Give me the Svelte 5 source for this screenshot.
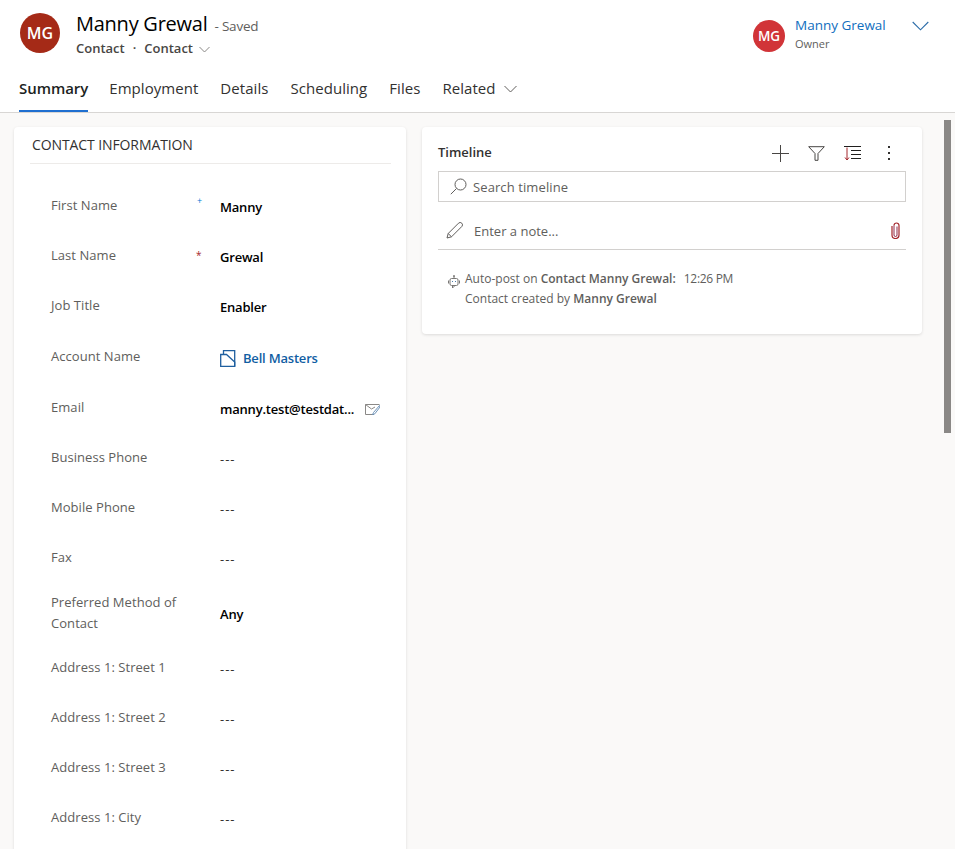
<script>
  const fields = [
    { label: 'First Name', value: 'Manny', req: 'rec' },
    { label: 'Last Name', value: 'Grewal', req: 'req' },
    { label: 'Job Title', value: 'Enabler' },
    { label: 'Account Name', value: 'Bell Masters', kind: 'link' },
    { label: 'Email', value: 'manny.test@testdat...', kind: 'mail' },
    { label: 'Business Phone', value: '---' },
    { label: 'Mobile Phone', value: '---' },
    { label: 'Fax', value: '---' },
    { label: 'Preferred Method of Contact', value: 'Any', tall: true },
    { label: 'Address 1: Street 1', value: '---' },
    { label: 'Address 1: Street 2', value: '---' },
    { label: 'Address 1: Street 3', value: '---' },
    { label: 'Address 1: City', value: '---' }
  ];
  const tabs = ['Summary', 'Employment', 'Details', 'Scheduling', 'Files'];
</script>

<div class="page">
  <header>
    <div class="top">
      <div class="avatar big">MG</div>
      <div class="title">
        <div class="name-row"><h1>Manny Grewal</h1><span class="saved">- Saved</span></div>
        <div class="crumbs">
          <span>Contact</span><span class="dot">·</span><span>Contact</span>
          <svg width="11" height="7" viewBox="0 0 11 7"><path d="M.5 1 5.500 6l5-5" fill="none" stroke="#8a8886"/></svg>
        </div>
      </div>
      <div class="owner">
        <div class="avatar small">MG</div>
        <div class="owner-text">
          <div class="owner-name">Manny Grewal</div>
          <div class="owner-role">Owner</div>
        </div>
        <svg class="owner-chev" width="17" height="10" viewBox="0 0 17 10"><path d="M.7 1 8.500 8.800 16.300 1" fill="none" stroke="#2b6ca8" stroke-width="1.100"/></svg>
      </div>
    </div>
    <nav>
      {#each tabs as t, i}
        <span class="tab" class:active={i === 0}>{t}</span>
      {/each}
      <span class="tab">Related
        <svg width="13" height="8" viewBox="0 0 13 8"><path d="M.5 1 6.500 7l6-6" fill="none" stroke="#605e5c"/></svg>
      </span>
    </nav>
  </header>

  <main>
    <section class="card info">
      <h2>CONTACT INFORMATION</h2>
      <div class="fields">
        {#each fields as f}
          <div class="field" class:tall={f.tall} class:wide={f.kind}>
            <div class="label">{f.label}</div>
            <div class="mark {f.req || ''}">{f.req === 'rec' ? '+' : f.req === 'req' ? '*' : ''}</div>
            <div class="value" class:link={f.kind === 'link'} class:empty={f.value === '---'}>
              {#if f.kind === 'link'}
                <svg width="16" height="17" viewBox="0 0 16 17" fill="none" stroke="#1f5f9f" stroke-width="1.300">
                  <path d="M3.500 4.500V.7h11.200v15.700"/>
                  <path d="M.7 4.500h5.800l8.200 7.500v4.300H.7z"/>
                </svg>
              {/if}
              <span>{f.value}</span>
              {#if f.kind === 'mail'}
                <svg class="mail" width="15" height="11" viewBox="0 0 15 11" fill="none">
                  <path d="M9 10.500H.5V.5h14" stroke="#8a8886"/>
                  <path d="M.5.500 6.500 5l3.500-2" stroke="#8a8886"/>
                  <path d="M14.500 1.500 8.500 8.500l-1 2.300 2.300-1L15 3z" stroke="#6f93b8"/>
                </svg>
              {/if}
            </div>
          </div>
        {/each}
      </div>
    </section>

    <section class="card timeline">
      <div class="tl-head">
        <span class="tl-title">Timeline</span>
        <div class="tl-tools">
          <svg width="17" height="17" viewBox="0 0 17 17"><path d="M8.500 0v17M0 8.500h17" stroke="#484644"/></svg>
          <svg width="17" height="15" viewBox="0 0 17 15" fill="none" stroke="#484644"><path d="M.7.700h15.600L10 7.500v6.800H7V7.500z"/></svg>
          <svg width="17" height="15" viewBox="0 0 17 15" fill="none"><path d="M0 .5h17M7 4.500h10M7 8.500h10M7 12.500h10" stroke="#201f1e"/><path d="M3 1.500v12.500M1 11.500 3 14l2-2.500" stroke="#a4262c"/></svg>
          <svg class="dots" width="4" height="14" viewBox="0 0 4 14"><path d="M1 0h2v2H1zM1 6h2v2H1zM1 12h2v2H1z" fill="#323130"/></svg>
        </div>
      </div>
      <div class="search">
        <svg width="17" height="17" viewBox="0 0 17 17" fill="none" stroke="#605e5c"><circle cx="10.500" cy="6.500" r="5.500"/><path d="M6.500 10.500.8 16.200"/></svg>
        <span>Search timeline</span>
      </div>
      <div class="note">
        <svg width="17" height="17" viewBox="0 0 17 17" fill="none" stroke="#605e5c"><path d="M1 16l1.200-4.500L12.500 1.200a1.800 1.800 0 0 1 3.300 3.300L5.500 14.800zM2.200 11.500l3.300 3.300"/></svg>
        <span>Enter a note...</span>
        <svg class="clip" width="9" height="17" viewBox="0 0 9 17" fill="none"><path d="M1 4v9a3.500 3.500 0 0 0 7 0V3.500a2.500 2.500 0 0 0-5 0" stroke="#a4262c" stroke-width="1.200"/><path d="M3 3.500v9.500a1.500 1.500 0 0 0 3 0V4.500" stroke="#8f2a4a"/></svg>
      </div>
      <div class="post">
        <svg width="12" height="14" viewBox="0 0 12 14" fill="none" stroke="#797775"><path d="M6 3V1"/><circle cx="6" cy="1" r=".6"/><rect x="2" y="3.500" width="8" height="7" rx="1.500"/><path d="M.5 5.500v3M11.500 5.500v3M4.500 10.500V13l2.500-2.500"/><path d="M4 6.500h1M7 6.500h1" stroke="#4c7da8"/></svg>
        <div class="post-text">
          <div>Auto-post on <b>Contact Manny Grewal:</b><span class="time">12:26 PM</span></div>
          <div class="second">Contact created by <b>Manny Grewal</b></div>
        </div>
      </div>
    </section>
  </main>

  <div class="thumb"></div>
</div>

<style>
  :global(body) {
    margin: 0;
  }
  .page {
    position: relative;
    height: 849px;
    overflow: hidden;
    background: #faf9f8;
    color: #323130;
    font-family: 'Open Sans', 'Noto Sans', sans-serif;
    font-size: 13px;
  }
  header {
    height: 113px;
    box-sizing: border-box;
    background: #fff;
    border-bottom: 1px solid #d8d6d4;
    padding: 12px 26px 0 20px;
  }
  .top {
    display: flex;
    align-items: flex-start;
    height: 51px;
  }
  .avatar {
    border-radius: 50%;
    color: #fff;
    font-weight: 600;
    display: flex;
    align-items: center;
    justify-content: center;
    flex-shrink: 0;
  }
  .big {
    width: 40px;
    height: 40px;
    margin-top: 1px;
    background: #a52a17;
    font-size: 16px;
  }
  .small {
    width: 32px;
    height: 32px;
    background: #d13438;
    font-size: 13.500px;
  }
  .title {
    margin-left: 16px;
  }
  .name-row {
    display: flex;
    align-items: baseline;
    gap: 7px;
    height: 24px;
  }
  h1 {
    margin: 0;
    font-size: 20px;
    font-weight: 500;
    line-height: 24px;
    color: #000;
    letter-spacing: -0.25px;
  }
  .saved {
    font-size: 13.500px;
    color: #605e5c;
    letter-spacing: -0.2px;
  }
  .crumbs {
    margin-top: 3px;
    display: flex;
    align-items: center;
    font-weight: 600;
    font-size: 13px;
    color: #484644;
    line-height: 18px;
  }
  .dot {
    margin: 0 8px;
  }
  .crumbs svg {
    margin: 2px 0 0 6px;
  }
  .owner {
    margin-left: auto;
    display: flex;
    align-items: flex-start;
    padding-top: 8px;
  }
  .owner-text {
    margin-left: 10px;
    margin-top: -4px;
    width: 117px;
  }
  .owner-name {
    color: #106ebe;
    font-size: 13.500px;
    line-height: 18px;
  }
  .owner-role {
    color: #605e5c;
    font-size: 11px;
    line-height: 16px;
    margin-top: 2px;
  }
  .owner-chev {
    margin-top: 1px;
  }
  nav {
    display: flex;
    gap: 22px;
    height: 49px;
    margin-left: -1px;
  }
  .tab {
    font-size: 15px;
    line-height: 20px;
    padding-top: 15px;
    color: #323130;
    box-sizing: border-box;
    height: 49px;
    letter-spacing: 0.05px;
  }
  .tab svg {
    margin-left: 5px;
    vertical-align: 1px;
  }
  .active {
    font-weight: 600;
    color: #201f1e;
    border-bottom: 2px solid #1f6fd0;
    margin-right: -1px;
    letter-spacing: -0.05px;
  }
  main {
    display: flex;
    align-items: flex-start;
    gap: 16px;
    padding: 14px 0 0 14px;
  }
  .card {
    background: #fff;
    border-radius: 4px;
    box-shadow: 0 1px 3px rgba(0, 0, 0, 0.12);
  }
  .info {
    width: 392px;
    box-sizing: border-box;
    padding: 0 15px 0 16px;
    height: 800px;
  }
  h2 {
    margin: 0;
    height: 36px;
    padding-left: 2px;
    line-height: 36px;
    font-size: 14px;
    font-weight: 500;
    letter-spacing: -0.1px;
    border-bottom: 1px solid #edebe9;
  }
  .fields {
    padding-top: 16px;
  }
  .field {
    display: grid;
    grid-template-columns: 145px 24px 1fr;
    height: 50px;
    box-sizing: border-box;
    align-items: center;
    padding-left: 21px;
  }
  .wide {
    height: 51px;
    padding-top: 2px;
  }
  .tall {
    height: 60px;
  }
  .tall .label {
    padding-top: 2px;
  }
  .label {
    color: #605e5c;
    line-height: 21px;
    letter-spacing: 0.05px;
  }
  .mark {
    align-self: start;
    font-size: 9px;
    line-height: 12px;
    padding-left: 1px;
  }
  .rec {
    color: #0078d4;
    margin-top: 15px;
  }
  .req {
    color: #a4262c;
    margin-top: 19px;
    padding-left: 0;
    font-size: 10px;
  }
  .value {
    display: flex;
    align-items: center;
    color: #000;
    font-weight: 600;
    font-size: 13px;
    letter-spacing: -0.2px;
    padding-top: 3px;
  }
  .empty {
    font-weight: 400;
    color: #323130;
    letter-spacing: 1px;
  }
  .link {
    color: #115ea3;
    gap: 7px;
  }
  .mail {
    margin-left: 11px;
  }
  .timeline {
    width: 500px;
    height: 207px;
    box-sizing: border-box;
    padding: 0 16px;
  }
  .tl-head {
    display: flex;
    align-items: center;
    justify-content: space-between;
    height: 44px;
    padding: 6px 15px 0 0;
    box-sizing: border-box;
  }
  .tl-title {
    font-weight: 600;
    color: #323130;
  }
  .tl-tools {
    display: flex;
    align-items: center;
    gap: 19px;
    padding-top: 2px;
  }
  .dots {
    margin-left: 7px;
  }
  .search {
    height: 31px;
    box-sizing: border-box;
    border: 1px solid #d2d0ce;
    display: flex;
    align-items: center;
    gap: 6px;
    padding-left: 11px;
    color: #605e5c;
    letter-spacing: 0.1px;
  }
  .note {
    height: 48px;
    box-sizing: border-box;
    border-bottom: 1px solid #d2d0ce;
    display: flex;
    align-items: center;
    gap: 11px;
    padding: 10px 6px 0 8px;
    color: #605e5c;
  }
  .clip {
    margin-left: auto;
  }
  .post {
    display: flex;
    gap: 5px;
    padding: 20px 0 0 10px;
    font-size: 12px;
    color: #605e5c;
  }
  .post svg {
    margin-top: 5px;
  }
  .post-text {
    line-height: 18px;
  }
  .post b {
    font-weight: 600;
  }
  .time {
    margin-left: 8px;
    letter-spacing: -0.3px;
  }
  .second {
    margin-top: 2px;
  }
  .thumb {
    position: absolute;
    left: 944px;
    top: 120px;
    width: 7px;
    height: 313px;
    background: #8a8886;
  }
</style>
